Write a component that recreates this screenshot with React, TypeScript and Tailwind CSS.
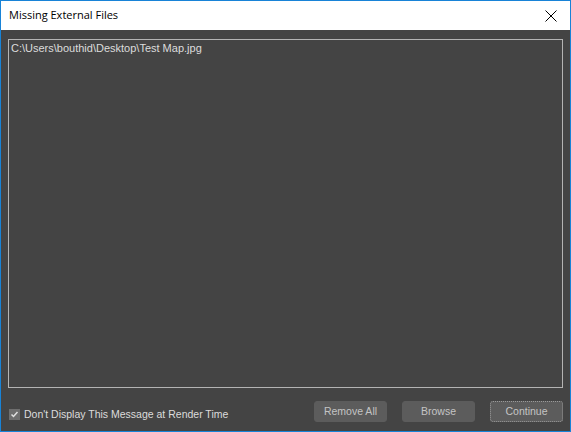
import React from "react";

export default function App() {
  return (
    <div
      className="w-[571px] h-[432px] border border-[#1883d7] flex flex-col bg-[#444444]"
      style={{ fontFamily: '"Liberation Sans", Arial, sans-serif' }}
    >
      <div className="h-[29px] bg-white flex items-center justify-between pl-[8px] pr-[10px]">
        <span className="text-[11px] text-black" style={{ fontFamily: '"Open Sans", "Noto Sans", sans-serif' }}>
          Missing External Files
        </span>
        <svg width="12" height="12" viewBox="0 0 12 12" className="mr-[3px]">
          <path d="M0.5 0.5 L11.5 11.5 M11.5 0.5 L0.5 11.5" stroke="#000" strokeWidth="1" />
        </svg>
      </div>
      <div className="flex-1 flex flex-col px-[7px] pt-[9px]">
        <div className="h-[349px] border border-[#b4b4b4] bg-[#444444] px-[2px] pt-[2px]">
          <div className="text-[11px] leading-[13px] text-[#dcdcdc]">C:\Users\bouthid\Desktop\Test Map.jpg</div>
        </div>
        <div className="flex items-center mt-[13px]">
          <div className="flex items-center gap-[4px] pl-[1px] mt-[6px]">
            <div className="w-[11px] h-[11px] bg-[#6e6e6e] flex items-center justify-center">
              <svg width="9" height="9" viewBox="0 0 9 9">
                <path d="M1.5 4.5 L3.5 6.5 L7.5 2" stroke="#e0e0e0" strokeWidth="1.5" fill="none" />
              </svg>
            </div>
            <span className="text-[10.5px] text-[#dcdcdc]">Don't Display This Message at Render Time</span>
          </div>
          <div className="ml-auto flex gap-[15px]">
            <button className="w-[73px] h-[21px] rounded-[3px] bg-[#5c5c5c] border border-[#5c5c5c] text-[10.5px] text-[#c4c4c4]">
              Remove All
            </button>
            <button className="w-[73px] h-[21px] rounded-[3px] bg-[#5c5c5c] border border-[#5c5c5c] text-[10.5px] text-[#c4c4c4]">
              Browse
            </button>
            <button className="w-[73px] h-[21px] rounded-[3px] bg-[#5c5c5c] border border-dotted border-[#9a9a9a] text-[10.5px] text-[#c4c4c4]">
              Continue
            </button>
          </div>
        </div>
      </div>
    </div>
  );
}
